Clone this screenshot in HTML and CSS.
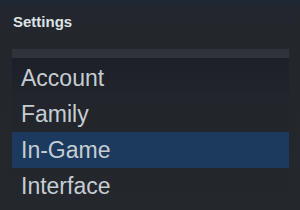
FILE: index.html
```html
<!DOCTYPE html>
<html lang="en">
<head>
    <meta charset="UTF-8">
    <title>Settings</title>
    <link rel="stylesheet" href="styles.css">
</head>
<body>
    <div id="settings">
        <div class="title">Settings</div>
        <div class="menu">
            <div class="menu-top"></div>
            <div class="item">Account</div>
            <div class="item">Family</div>
            <div class="item selected">In-Game</div>
            <div class="item">Interface</div>
        </div>
    </div>
</body>
</html>
```
FILE: styles.css
```css
body {
    margin: 0;
    width: 300px;
    height: 210px;
    overflow: hidden;
    background: linear-gradient(to bottom, #1e2835 0px, #23262c 12px, #24272c 100%);
    font-family: 'Liberation Sans', Arial, sans-serif;
}
#settings {
    padding: 12px 0 0 12px;
}
.title {
    font-size: 15px;
    line-height: 20px;
    font-weight: bold;
    color: #dde2e6;
    height: 37px;
    padding-left: 1px;
}
.menu {
    width: 277px;
    background: linear-gradient(to bottom, #1a1e27 0px, #22252b 50px, #24272c 100%);
    height: 170px;
}
.menu-top {
    height: 9px;
    background: #30333a;
    margin-bottom: 2px;
}
.item {
    height: 36px;
    line-height: 36px;
    padding-left: 9px;
    font-size: 23px;
    color: #c5cdd3;
}
.selected {
    background: #1b3a5d;
}
```
